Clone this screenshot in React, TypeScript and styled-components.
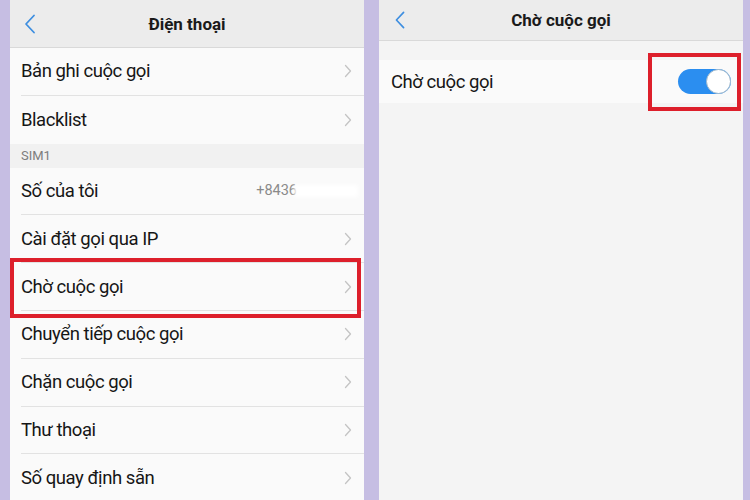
import React from 'react'
import styled, { createGlobalStyle } from 'styled-components'

const GlobalStyle = createGlobalStyle`
  html, body {
    margin: 0;
    padding: 0;
    background: #c6bee3;
    font-family: Roboto, 'Noto Sans', 'Liberation Sans', sans-serif;
  }
`

const Stage = styled.div`
  width: 750px;
  height: 500px;
  display: flex;
  gap: 15px;
  padding-left: 10px;
  box-sizing: border-box;
  background: #c6bee3;
  overflow: hidden;
`

const Screen = styled.div<{ $width: number; $bg: string }>`
  position: relative;
  width: ${(p) => p.$width}px;
  height: 100%;
  display: flex;
  flex-direction: column;
  background: ${(p) => p.$bg};
`

const TopBar = styled.div<{ $height: number }>`
  position: relative;
  height: ${(p) => p.$height}px;
  flex-shrink: 0;
  display: flex;
  align-items: center;
  justify-content: center;
  background: #ececec;
  border-bottom: 1px solid #d9d9d9;
  box-sizing: border-box;
`

const BackButton = styled.div<{ $left: number }>`
  position: absolute;
  left: ${(p) => p.$left}px;
  top: 0;
  bottom: 0;
  display: flex;
  align-items: center;
`

const Title = styled.div`
  font-size: 17px;
  font-weight: 700;
  color: #1a1a1a;
`

const List = styled.div`
  display: flex;
  flex-direction: column;
  background: #fafafa;
`

const Row = styled.div<{ $last?: boolean }>`
  height: 47.8px;
  flex-shrink: 0;
  margin-left: 11px;
  padding-right: 12px;
  display: flex;
  align-items: center;
  justify-content: space-between;
  border-bottom: ${(p) => (p.$last ? 'none' : '1px solid #e2e2e2')};
  box-sizing: border-box;
`

const Label = styled.span`
  font-size: 18.5px;
  letter-spacing: -0.45px;
  color: #161616;
`

const Section = styled.div`
  height: 24px;
  flex-shrink: 0;
  padding-left: 11px;
  display: flex;
  align-items: center;
  background: #f1f1f1;
  font-size: 13px;
  color: #7d7d7d;
`

const Value = styled.div`
  display: flex;
  align-items: center;
  margin-right: -6px;
  font-size: 14.5px;
  color: #8a8a8a;
`

const Smudge = styled.span`
  display: inline-block;
  width: 64px;
  height: 12px;
  background: #ffffff;
  filter: blur(2px);
  margin-left: -3px;
`

const Highlight = styled.div<{ $top: number; $left: number; $w: number; $h: number }>`
  position: absolute;
  top: ${(p) => p.$top}px;
  left: ${(p) => p.$left}px;
  width: ${(p) => p.$w}px;
  height: ${(p) => p.$h}px;
  border: 4px solid #dd1f2b;
  box-sizing: border-box;
  pointer-events: none;
`

const Body = styled.div`
  flex: 1;
  padding-top: 19px;
  background: #f4f4f4;
`

const SwitchRow = styled.div`
  height: 43px;
  padding: 0 12px 0 12px;
  display: flex;
  align-items: center;
  justify-content: space-between;
  background: #fafafa;
`

const Toggle = styled.div<{ $on: boolean }>`
  width: 53px;
  height: 25px;
  border-radius: 13px;
  background: ${(p) => (p.$on ? '#2b8ef0' : '#d0d0d0')};
  display: flex;
  align-items: center;
  justify-content: ${(p) => (p.$on ? 'flex-end' : 'flex-start')};
  padding: 0 1px;
  box-sizing: border-box;
`

const Knob = styled.div`
  width: 25px;
  height: 25px;
  border-radius: 50%;
  background: #ffffff;
  border: 1px solid #9fb8cc;
  box-sizing: border-box;
  margin-right: -1px;
`

const Back = ({ height }: { height: number }) => (
  <svg width="12" height={height} viewBox="0 0 12 20" fill="none">
    <path d="M10 1.5 L2 10 L10 18.5" stroke="#3d8ee0" strokeWidth="1.8" strokeLinecap="round" strokeLinejoin="round" />
  </svg>
)

const Chevron = () => (
  <svg width="8" height="14" viewBox="0 0 8 14" fill="none">
    <path d="M1.5 1.5 L6.5 7 L1.5 12.5" stroke="#c4c4c4" strokeWidth="1.3" strokeLinecap="round" strokeLinejoin="round" />
  </svg>
)

const topItems = ['Bản ghi cuộc gọi', 'Blacklist']
const simItems = ['Cài đặt gọi qua IP', 'Chờ cuộc gọi', 'Chuyển tiếp cuộc gọi', 'Chặn cuộc gọi', 'Thư thoại', 'Số quay định sẵn']

export default function App() {
  return (
    <Stage>
      <GlobalStyle />
      <Screen $width={354} $bg="#fafafa">
        <TopBar $height={48}>
          <BackButton $left={14}>
            <Back height={20} />
          </BackButton>
          <Title>Điện thoại</Title>
        </TopBar>
        <List>
          {topItems.map((item, i) => (
            <Row key={item} $last={i === topItems.length - 1}>
              <Label>{item}</Label>
              <Chevron />
            </Row>
          ))}
        </List>
        <Section>SIM1</Section>
        <List>
          <Row>
            <Label>Số của tôi</Label>
            <Value>
              +8436
              <Smudge />
            </Value>
          </Row>
          {simItems.map((item, i) => (
            <Row key={item} $last={i === simItems.length - 1}>
              <Label>{item}</Label>
              <Chevron />
            </Row>
          ))}
        </List>
        <Highlight $top={258} $left={0} $w={351} $h={60} />
      </Screen>

      <Screen $width={364} $bg="#f4f4f4">
        <TopBar $height={41}>
          <BackButton $left={15}>
            <Back height={18} />
          </BackButton>
          <Title>Chờ cuộc gọi</Title>
        </TopBar>
        <Body>
          <SwitchRow>
            <Label>Chờ cuộc gọi</Label>
            <Toggle $on>
              <Knob />
            </Toggle>
          </SwitchRow>
        </Body>
        <Highlight $top={53} $left={269} $w={93} $h={58} />
      </Screen>
    </Stage>
  )
}
